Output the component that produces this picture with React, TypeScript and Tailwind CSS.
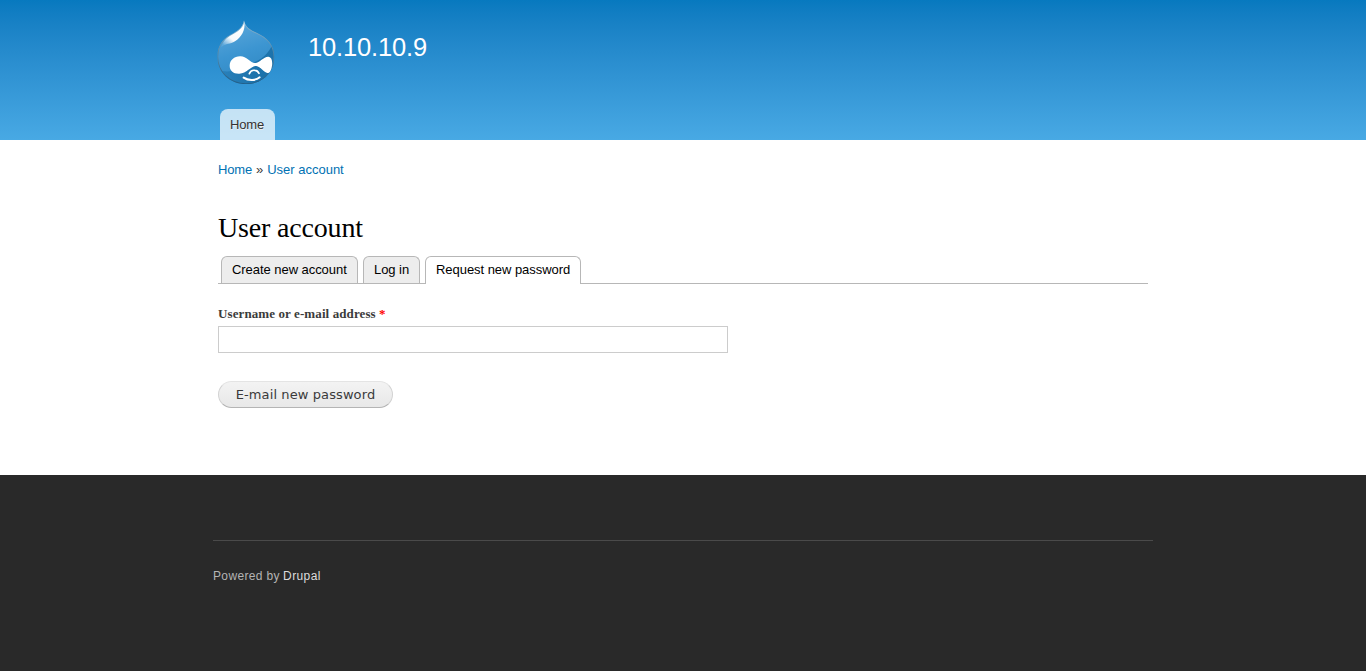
import React from "react";

function Logo() {
  return (
    <svg className="block h-[76px] w-[72px]" viewBox="0 0 216 228" role="img" aria-label="Home">
      <defs>
        <linearGradient id="drop" x1="0.3" y1="0" x2="0.6" y2="1">
          <stop offset="0" stopColor="#63abdc" />
          <stop offset="0.5" stopColor="#3c95d1" />
          <stop offset="1" stopColor="#2b83bd" />
        </linearGradient>
        <linearGradient id="shine" x1="0.8" y1="0.2" x2="0.2" y2="1">
          <stop offset="0" stopColor="#fff" />
          <stop offset="0.6" stopColor="#fff" stopOpacity="0.95" />
          <stop offset="1" stopColor="#fff" stopOpacity="0.1" />
        </linearGradient>
        <linearGradient id="shade" x1="1" y1="0" x2="0" y2="0.6">
          <stop offset="0" stopColor="#1369a1" stopOpacity="0.75" />
          <stop offset="0.6" stopColor="#1369a1" stopOpacity="0.7" />
          <stop offset="1" stopColor="#1369a1" stopOpacity="0.35" />
        </linearGradient>
        <linearGradient id="rim" x1="0" y1="0" x2="0" y2="1">
          <stop offset="0" stopColor="#8ab9d6" />
          <stop offset="0.5" stopColor="#5488a8" />
          <stop offset="1" stopColor="#225f89" />
        </linearGradient>
        <clipPath id="shape">
          <path d="M102 19C106 42 122 48 141 57C172 71 193 94 193 128C193 177 156 210 108 210C59 210 22 174 22 128C22 99 36 77 59 64C79 53 98 44 102 19Z" />
        </clipPath>
      </defs>
      <g clipPath="url(#shape)">
        <rect width="216" height="228" fill="url(#drop)" />
        <path d="M190 80C184 111 157 139 116 151C83 170 52 180 22 166V220H200V80Z" fill="url(#shade)" />
        <path d="M102 19C106 42 122 48 141 57C172 71 193 94 193 128C193 177 156 210 108 210C59 210 22 174 22 128C22 99 36 77 59 64C79 53 98 44 102 19Z" fill="none" stroke="url(#rim)" strokeWidth="5" />
      </g>
      <path d="M103 24C107 48 94 70 75 82C60 91 48 88 34 99C37 83 51 69 66 62C84 52 98 44 103 24Z" fill="url(#shine)" />
      <path d="M92 127C109 127 122 148 136 147C149 146 162 127 175 128C185 129 188 142 186 155C184 169 179 178 172 177C162 176 151 157 139 156C123 155 110 179 88 179C70 180 59 169 59 155C59 138 74 126 92 127Z" fill="#fff" />
      <path d="M118 179C121 171 129 168 135 169C142 169 145 174 147 178" fill="none" stroke="#fff" strokeWidth="5" strokeLinecap="round" />
      <path d="M101 191C115 201 138 200 149 190" fill="none" stroke="#fff" strokeWidth="6" strokeLinecap="round" />
    </svg>
  );
}

const tab = "block h-[27px] rounded-t-[6px] border border-b-0 border-[#b7b7b7] pl-2.5 text-[13px] leading-[26px] tracking-[-0.05px] whitespace-nowrap text-black";

export default function App() {
  return (
    <div className="flex min-h-[671px] flex-col bg-[#292929] font-['Liberation_Sans',Arial,sans-serif]">
      <header className="h-[140px] bg-linear-to-b from-[#0779bf] to-[#48a9e4]">
        <div className="mx-auto flex h-full w-[940px] flex-col justify-between">
          <div className="-ml-[3px] flex pt-3.5">
            <a href="#"><Logo /></a>
            <a href="#" className="mt-[15px] ml-[26px] text-[25.5px] leading-9 tracking-[-0.15px] text-[#fffeff]">10.10.10.9</a>
          </div>
          <nav className="pl-[7px]">
            <a href="#" className="block h-[31px] w-[55px] rounded-t-[8px] bg-white/70 pl-2.5 text-[13px] leading-[31px] tracking-[-0.15px] text-[#333] [text-shadow:0_1px_#eee]">Home</a>
          </nav>
        </div>
      </header>
      <main className="h-[335px] bg-white">
        <div className="mx-auto w-[930px]">
          <div className="pt-5 text-[13px] leading-5 text-[#3b3b3b]">
            <a href="#" className="mr-[0.3px] tracking-[-0.15px] text-[#0071b3]">Home</a> » <a href="#" className="ml-[0.3px] text-[#0071b3]">User account</a>
          </div>
          <h1 className="mt-8 font-['Liberation_Serif',Georgia,serif] text-[28px] leading-8 tracking-[-0.17px] text-black">User account</h1>
          <nav className="mt-3 flex h-7 gap-[5px] border-b border-[#b7b7b7] pl-[3px]">
            <a href="#" className={`${tab} w-[137px] bg-[#ededed]`}>Create new account</a>
            <a href="#" className={`${tab} w-[57px] bg-[#ededed]`}>Log in</a>
            <a href="#" className={`${tab} -mb-px h-[28px] w-[156px] bg-white`}>Request new password</a>
          </nav>
          <form className="pt-5" onSubmit={(e) => e.preventDefault()}>
            <label htmlFor="name" className="block font-['Liberation_Serif',Georgia,serif] text-[13px] leading-5 font-bold tracking-[0.1px] text-[#3b3b3b]">
              Username or e-mail address <span className="text-[#f00]">*</span>
            </label>
            <input id="name" className="mt-0.5 block h-[27px] w-[510px] border border-[#ccc] bg-white px-1 text-sm text-[#3b3b3b] outline-none" />
            <button className="mt-7 block h-[27px] w-[175px] rounded-[14px] border border-[#e4e4e4] border-x-[#d2d2d2] border-b-[#b4b4b4] bg-linear-to-b from-[#f3f3f3] to-[#e8e8e8] text-center font-['DejaVu_Sans',Verdana,sans-serif] text-[13px] leading-[25px] tracking-[0.1px] whitespace-nowrap text-[#3a3a3a]">E-mail new password</button>
          </form>
        </div>
      </main>
      <footer className="pt-[65px]">
        <div className="mx-auto w-[940px] border-t border-[#4a4a4a] pt-[25px] text-[12px] leading-5 tracking-[0.35px] text-[#b4b4b4]">
          Powered by <a href="#" className="-ml-[0.5px] tracking-[0.4px] text-[#dcdcdc]">Drupal</a>
        </div>
      </footer>
    </div>
  );
}
